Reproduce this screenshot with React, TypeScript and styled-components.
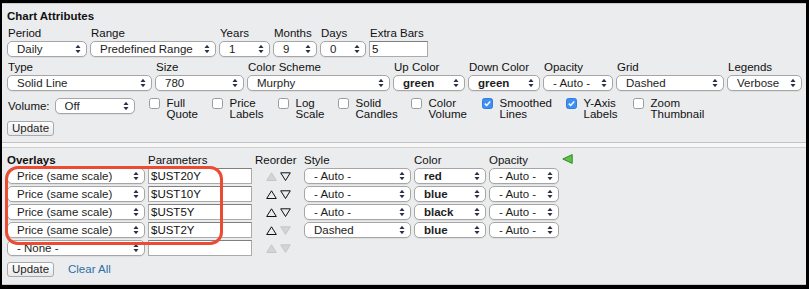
import React from 'react';
import styled, { createGlobalStyle } from 'styled-components';

const GlobalStyle = createGlobalStyle`
  html, body {
    margin: 0;
    padding: 0;
    background: #000;
  }
  body {
    font-family: "Liberation Sans", Arial, Helvetica, sans-serif;
    font-size: 11.5px;
    color: #111;
  }
`;

const Frame = styled.div`
  width: 809px;
  height: 289px;
  box-sizing: border-box;
  padding: 3px 3px 4px 2px;
  display: flex;
`;

const Sheet = styled.div`
  flex: 1;
  display: flex;
  flex-direction: column;
  gap: 4px;
  background: #f7f7f7;
  border-top: 1px solid #cacaca;
  border-bottom: 1px solid #cacaca;
`;

const TopPanel = styled.section`
  background: #ebecee;
  border-bottom: 1px solid #c3c3c3;
  padding: 5px 0 6px 5px;
`;

const BottomPanel = styled.section`
  position: relative;
  flex: 1;
  background: #ebecee;
  border-top: 1px solid #cfcfcf;
  padding: 6px 0 0 5px;
`;

const Title = styled.div`
  font-weight: bold;
  line-height: 14px;
`;

const FieldRow = styled.div<{ $mt: number }>`
  display: flex;
  margin-top: ${p => p.$mt}px;
`;

const Field = styled.div<{ $w: number }>`
  flex: none;
  width: ${p => p.$w}px;
  box-sizing: border-box;
  padding-right: 3px;
`;

const Label = styled.div`
  line-height: 14px;
  padding-left: 1px;
  margin-bottom: 1px;
  white-space: nowrap;
`;

const SelectBox = styled.div<{ $w?: number; $bold?: boolean }>`
  box-sizing: border-box;
  width: ${p => (p.$w ? `${p.$w}px` : '100%')};
  height: 16px;
  display: flex;
  align-items: center;
  border: 1px solid #a6a6a6;
  border-radius: 5px;
  background: #fff;
  padding: 0 5px 0 9px;
  font-weight: ${p => (p.$bold ? 'bold' : 'normal')};
  color: #1d1d1d;
  white-space: nowrap;
  overflow: hidden;
  box-shadow: 0 1px 0 rgba(0, 0, 0, 0.06);
`;

const SelectText = styled.span`
  flex: 1;
  overflow: hidden;
`;

const TextInput = styled.input`
  box-sizing: border-box;
  width: 100%;
  height: 16px;
  margin: 0;
  padding: 0 2px;
  border: 1px solid #ababab;
  border-top-color: #7f7f7f;
  background: #fff;
  font: inherit;
  color: #111;
  outline: none;
`;

const OptionRow = styled.div`
  display: flex;
  align-items: flex-start;
  margin-top: 7px;
`;

const InlineLabel = styled.span`
  line-height: 16px;
  margin: 0 5px 0 1px;
`;

const CheckList = styled.div`
  display: flex;
  margin-left: 14px;
`;

const CheckOption = styled.div<{ $w?: number }>`
  flex: none;
  width: ${p => (p.$w ? `${p.$w}px` : 'auto')};
  display: flex;
  align-items: flex-start;
`;

const Box = styled.span<{ $on?: boolean }>`
  flex: none;
  box-sizing: border-box;
  width: 11px;
  height: 11px;
  margin-right: 7px;
  border: 1px solid ${p => (p.$on ? '#2f7ddf' : '#9b9b9b')};
  border-radius: 2.5px;
  background: ${p => (p.$on ? '#3d8ff4' : '#fff')};
  display: flex;
  align-items: center;
  justify-content: center;
`;

const CheckText = styled.span`
  line-height: 11px;
`;

const Button = styled.button<{ $mt: number }>`
  display: block;
  box-sizing: border-box;
  width: 47px;
  height: 15px;
  margin: ${p => p.$mt}px 0 0 0;
  padding: 0;
  border: 1px solid #a9a9a9;
  border-radius: 3px;
  background: linear-gradient(#fefefe, #e9e9e9);
  font: inherit;
  line-height: 13px;
  color: #1e1e1e;
`;

const OverlayGrid = styled.div`
  display: grid;
  grid-template-columns: 138px 104px 46px 107px 72px 70px 12px;
  grid-template-rows: 12px;
  grid-auto-rows: 16px;
  column-gap: 3px;
  row-gap: 2px;
`;

const HeadCell = styled.div<{ $bold?: boolean }>`
  line-height: 12px;
  white-space: nowrap;
  font-weight: ${p => (p.$bold ? 'bold' : 'normal')};
`;

const Reorder = styled.div`
  display: flex;
  align-items: center;
  justify-content: center;
  gap: 3px;
`;

const Footer = styled.div`
  display: flex;
  align-items: center;
  margin-top: 6px;
`;

const FooterButton = styled(Button)`
  margin: 0;
`;

const ClearLink = styled.span`
  margin-left: 14px;
  line-height: 15px;
  color: #2d6ea9;
`;

const Highlight = styled.div`
  position: absolute;
  left: 3px;
  top: 18px;
  width: 218px;
  height: 79px;
  box-sizing: border-box;
  border: 3px solid #eb4b33;
  border-radius: 13px;
  pointer-events: none;
`;

function Arrows() {
  return (
    <svg width="6" height="10" viewBox="0 0 6 10">
      <polygon points="0.5,4 3,0.8 5.5,4" fill="#2e2f48" />
      <polygon points="0.5,6 3,9.2 5.5,6" fill="#2e2f48" />
    </svg>
  );
}

function Select({ value, w, bold }: { value: string; w?: number; bold?: boolean }) {
  return (
    <SelectBox $w={w} $bold={bold}>
      <SelectText>{value}</SelectText>
      <Arrows />
    </SelectBox>
  );
}

function Check({ on }: { on?: boolean }) {
  return (
    <Box $on={on}>
      {on && (
        <svg width="9" height="9" viewBox="0 0 9 9">
          <path d="M1.8 4.6 L3.7 6.5 L7.2 2.4" fill="none" stroke="#fff" strokeWidth="1.5" />
        </svg>
      )}
    </Box>
  );
}

function Tri({ dir, off }: { dir: 'up' | 'down'; off?: boolean }) {
  const pts = dir === 'up' ? '5.5,0.8 10.3,8.5 0.7,8.5' : '0.7,0.8 10.3,0.8 5.5,8.5';
  return (
    <svg width="11" height="9" viewBox="0 0 11 9">
      <polygon
        points={pts}
        fill={off ? '#d4d4d4' : 'none'}
        stroke={off ? '#c6c6c6' : '#111'}
        strokeWidth="1"
      />
    </svg>
  );
}

const periodRow = [
  { label: 'Period', w: 83, value: 'Daily' },
  { label: 'Range', w: 129, value: 'Predefined Range' },
  { label: 'Years', w: 54, value: '1' },
  { label: 'Months', w: 47, value: '9' },
  { label: 'Days', w: 49, value: '0' },
];

const typeRow = [
  { label: 'Type', w: 148, value: 'Solid Line' },
  { label: 'Size', w: 92, value: '780' },
  { label: 'Color Scheme', w: 146, value: 'Murphy' },
  { label: 'Up Color', w: 75, value: 'green', bold: true },
  { label: 'Down Color', w: 75, value: 'green', bold: true },
  { label: 'Opacity', w: 73, value: '- Auto -' },
  { label: 'Grid', w: 111, value: 'Dashed' },
  { label: 'Legends', w: 78, value: 'Verbose' },
];

const checks = [
  { top: 'Full', bottom: 'Quote', w: 63 },
  { top: 'Price', bottom: 'Labels', w: 66 },
  { top: 'Log', bottom: 'Scale', w: 60 },
  { top: 'Solid', bottom: 'Candles', w: 73 },
  { top: 'Color', bottom: 'Volume', w: 71 },
  { top: 'Smoothed', bottom: 'Lines', w: 84, on: true },
  { top: 'Y-Axis', bottom: 'Labels', w: 67, on: true },
  { top: 'Zoom', bottom: 'Thumbnail' },
];

type Overlay = {
  kind: string;
  param: string;
  up: boolean;
  down: boolean;
  style?: string;
  color?: string;
  opacity?: string;
};

const overlays: Overlay[] = [
  { kind: 'Price (same scale)', param: '$UST20Y', up: false, down: true, style: '- Auto -', color: 'red', opacity: '- Auto -' },
  { kind: 'Price (same scale)', param: '$UST10Y', up: true, down: true, style: '- Auto -', color: 'blue', opacity: '- Auto -' },
  { kind: 'Price (same scale)', param: '$UST5Y', up: true, down: true, style: '- Auto -', color: 'black', opacity: '- Auto -' },
  { kind: 'Price (same scale)', param: '$UST2Y', up: true, down: false, style: 'Dashed', color: 'blue', opacity: '- Auto -' },
  { kind: '- None -', param: '', up: false, down: false },
];

export default function App() {
  return (
    <>
      <GlobalStyle />
      <Frame>
        <Sheet>
          <TopPanel>
            <Title>Chart Attributes</Title>
            <FieldRow $mt={3}>
              {periodRow.map(f => (
                <Field key={f.label} $w={f.w}>
                  <Label>{f.label}</Label>
                  <Select value={f.value} />
                </Field>
              ))}
              <Field $w={62}>
                <Label>Extra Bars</Label>
                <TextInput readOnly value="5" />
              </Field>
            </FieldRow>
            <FieldRow $mt={3}>
              {typeRow.map(f => (
                <Field key={f.label} $w={f.w}>
                  <Label>{f.label}</Label>
                  <Select value={f.value} bold={f.bold} />
                </Field>
              ))}
            </FieldRow>
            <OptionRow>
              <InlineLabel>Volume:</InlineLabel>
              <Select value="Off" w={80} />
              <CheckList>
                {checks.map(c => (
                  <CheckOption key={c.top} $w={c.w}>
                    <Check on={c.on} />
                    <CheckText>
                      {c.top}
                      <br />
                      {c.bottom}
                    </CheckText>
                  </CheckOption>
                ))}
              </CheckList>
            </OptionRow>
            <Button $mt={1}>Update</Button>
          </TopPanel>

          <BottomPanel>
            <OverlayGrid>
              <HeadCell $bold>Overlays</HeadCell>
              <HeadCell>Parameters</HeadCell>
              <HeadCell>Reorder</HeadCell>
              <HeadCell>Style</HeadCell>
              <HeadCell>Color</HeadCell>
              <HeadCell>Opacity</HeadCell>
              <HeadCell>
                <svg width="11" height="10" viewBox="0 0 11 10">
                  <polygon points="0.8,5 10.2,0.6 10.2,9.4" fill="#5ec24a" stroke="#2f8a22" strokeWidth="1" />
                </svg>
              </HeadCell>
              {overlays.map((o, i) => (
                <React.Fragment key={i}>
                  <Select value={o.kind} />
                  <TextInput readOnly value={o.param} />
                  <Reorder>
                    <Tri dir="up" off={!o.up} />
                    <Tri dir="down" off={!o.down} />
                  </Reorder>
                  {o.style ? <Select value={o.style} /> : <span />}
                  {o.color ? <Select value={o.color} bold /> : <span />}
                  {o.opacity ? <Select value={o.opacity} /> : <span />}
                  <span />
                </React.Fragment>
              ))}
            </OverlayGrid>
            <Footer>
              <FooterButton $mt={0}>Update</FooterButton>
              <ClearLink>Clear All</ClearLink>
            </Footer>
            <Highlight />
          </BottomPanel>
        </Sheet>
      </Frame>
    </>
  );
}
